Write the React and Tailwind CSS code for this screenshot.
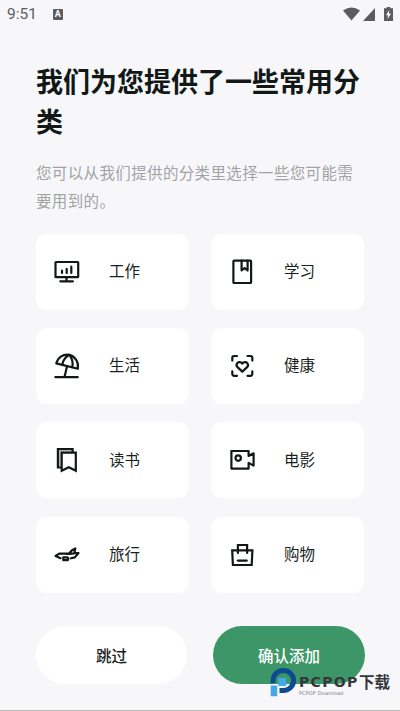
import React from "react";

const Icon = ({ children }) => (
  <svg
    viewBox="0 0 28 28"
    className="h-7 w-7 shrink-0"
    fill="none"
    stroke="#121816"
    strokeWidth="2.2"
    strokeLinecap="round"
    strokeLinejoin="round"
  >
    {children}
  </svg>
);

const categories = [
  {
    name: "工作",
    icon: (
      <Icon>
        <rect x="3.5" y="4" width="22.7" height="15.2" rx="0.5" />
        <path d="M10 12.7V15M14.7 10.9V15M19.3 8.700V15M14.500 19.500v3.800M8.300 23.300h12.600" />
      </Icon>
    ),
  },
  {
    name: "学习",
    icon: (
      <Icon>
        <rect x="6.4" y="2.6" width="17.7" height="22.4" rx="0.8" />
        <path d="M14.600 2.700v9.800l3-2.500 3 2.500V2.700" />
      </Icon>
    ),
  },
  {
    name: "生活",
    icon: (
      <Icon>
        <path d="M4.300 11.400C6 5.300 11.300 1.700 17.300 2.900c6.200 1.500 9.600 7.600 8.500 13.800Z" />
        <path d="M16.800 3c-3.600 2.200-5.800 5.500-6.600 9.800M17.500 3c2.900 3.700 3.800 7.700 2.700 12.100" />
        <path d="M15 14.500 12.500 25M3.300 25.100h22.500" />
      </Icon>
    ),
  },
  {
    name: "健康",
    icon: (
      <Icon>
        <path d="M5.300 8.600V5.800A1.800 1.800 0 0 1 7.100 4H10M20.500 4h3a1.800 1.800 0 0 1 1.800 1.800v2.800M25.300 19.300V22a1.800 1.800 0 0 1-1.800 1.800h-3M10 23.800H7.100A1.800 1.800 0 0 1 5.300 22v-2.700" />
        <path d="M15.300 11.700c-1.300-1.800-3.700-2.100-5-.6-1.200 1.400-.8 3.100.4 4.300l4.600 4.200 4.600-4.200c1.200-1.200 1.600-2.900.4-4.300-1.300-1.500-3.700-1.200-5 .6Z" />
      </Icon>
    ),
  },
  {
    name: "读书",
    icon: (
      <Icon>
        <path
          d="M8.500 21.500H5.900V3h14.700v2.800"
          fill="#b8bab9"
          strokeLinejoin="miter"
        />
        <path
          d="M9.700 6.600h14.100v18.200l-7-3.500-7.100 3.500Z"
          fill="#fff"
          strokeLinejoin="miter"
        />
      </Icon>
    ),
  },
  {
    name: "电影",
    icon: (
      <Icon>
        <path d="M4.400 5h17.200v5l5-2.700v12.300l-5-2.700v5.700H4.400Z" />
        <circle cx="11.200" cy="12.100" r="2.700" />
      </Icon>
    ),
  },
  {
    name: "旅行",
    icon: (
      <Icon>
        <path d="M8.500 17.200 3.500 15l3.800-2.400 9.500.1 3.200-3.500 3.300-1.700-1 4.700 4.200-.1-3.700 4.300-3.800.9M17 12.700l-3 .1M22 12.400l-4.500.4" />
        <path d="M11.300 16.300h3.500c2 0 2 2.900 0 2.900h-3.500Z" />
      </Icon>
    ),
  },
  {
    name: "购物",
    icon: (
      <Icon>
        <path
          d="M5.200 9.400h20.200l-.7 14.600H5.900ZM10.900 12V4h9.200v8"
          strokeLinejoin="miter"
        />
        <path d="M10.800 19.600h9" />
      </Icon>
    ),
  },
];

const StatusBar = () => (
  <header className="flex h-7 items-center justify-between pl-[7px] pr-[7px] text-[#5b5c5e]">
    <div className="flex items-center gap-4">
      <span className="font-[Roboto,sans-serif] text-[15.5px] leading-7">
        9:51
      </span>
      <span className="flex h-[11px] w-[10px] items-center justify-center rounded-[1px] bg-[#5b5c5e] font-[Roboto,sans-serif] text-[9px] font-bold leading-none text-white">
        A
      </span>
    </div>
    <div className="flex items-center">
      <svg viewBox="0 0 17 14" className="h-3.5 w-[17px]" fill="#5b5c5e">
        <path d="M0 3.500Q8.500-2.500 17 3.500L8.500 13.500Z" />
      </svg>
      <svg viewBox="0 0 12 13" className="ml-[3px] h-[13px] w-3" fill="#5b5c5e">
        <path d="M12 0v13H0Z" />
      </svg>
      <svg viewBox="0 0 9 14" className="ml-[9px] h-3.5 w-[9px]">
        <path d="M2.700 0h3.600v1.300H9V14H0V1.300h2.700Z" fill="#5b5c5e" />
        <path d="M5.300 3 2 8.200h2L3.500 12l3.500-5.200H5Z" fill="#fff" />
      </svg>
    </div>
  </header>
);

const CategoryCard = ({ name, icon }) => (
  <button className="flex h-[76px] items-center gap-[29px] rounded-[11px] bg-white pl-4">
    {icon}
    <span className="pb-[3px] text-[15.5px] leading-6 text-[#1b1f1e]">
      {name}
    </span>
  </button>
);

// Site logo that sits over the lower right corner
const Watermark = () => (
  <div className="absolute left-[270px] top-[667px] flex items-start">
    <svg viewBox="0 0 27 31" className="h-[31px] w-[27px]">
      <path
        d="M3.300 16.200C1.800 9.500 6.500 3.600 13.300 3.600c5.900 0 10.300 4.400 10.300 9.900s-4.400 10-10.300 10H9.500"
        fill="none"
        stroke="#0c4b92"
        strokeWidth="5"
      />
      <path d="M8.300 11h7.900v8H8.300ZM.7 18.500h6.500v10.800H.7Z" fill="#45a9e3" />
    </svg>
    <div className="ml-0.5 flex flex-col pt-[6px] text-[#35373b]">
      <div className="flex h-[17px] items-center">
        <span className="w-[60px] font-['DejaVu_Sans',sans-serif] text-[14px] font-bold leading-none tracking-[1.3px]">
          PCPOP
        </span>
        <span className="text-[15.5px] font-bold leading-none">下载</span>
      </div>
      <span className="font-['DejaVu_Sans',sans-serif] text-[5px] leading-[6px] tracking-[0.1px] text-[#77797c]">
        PCPOP Download
      </span>
    </div>
  </div>
);

const App = () => {
  return (
    <main className="relative h-[711px] w-[400px] overflow-hidden border-b border-[#b8b9bc] bg-[#f7f7fa] font-['Noto_Sans_CJK_SC',sans-serif]">
      <StatusBar />

      <section className="pl-9 pr-8 pt-[33px]">
        <h1 className="text-[27px] font-bold leading-10 text-[#121816]">
          我们为您提供了一些常用分类
        </h1>
        <p className="mt-[17px] text-[15.5px] leading-7 tracking-[0.36px] text-[#a2a3a5]">
          您可以从我们提供的分类里选择一些您可能需要用到的。
        </p>
      </section>

      <div className="mt-[19.5px] grid grid-cols-[153px_153px] gap-x-[22px] gap-y-[18.4px] pl-9">
        {categories.map((item) => (
          <CategoryCard key={item.name} name={item.name} icon={item.icon} />
        ))}
      </div>

      <footer className="mt-[33.5px] flex gap-[26px] pl-9 text-[15.5px] font-medium">
        <button className="h-[58px] w-[151px] rounded-full bg-white text-[#1b1f1e]">
          跳过
        </button>
        <button className="h-[58px] w-[152px] rounded-full bg-[#3d9667] text-white">
          确认添加
        </button>
      </footer>

      <Watermark />
    </main>
  );
};

export default App;
